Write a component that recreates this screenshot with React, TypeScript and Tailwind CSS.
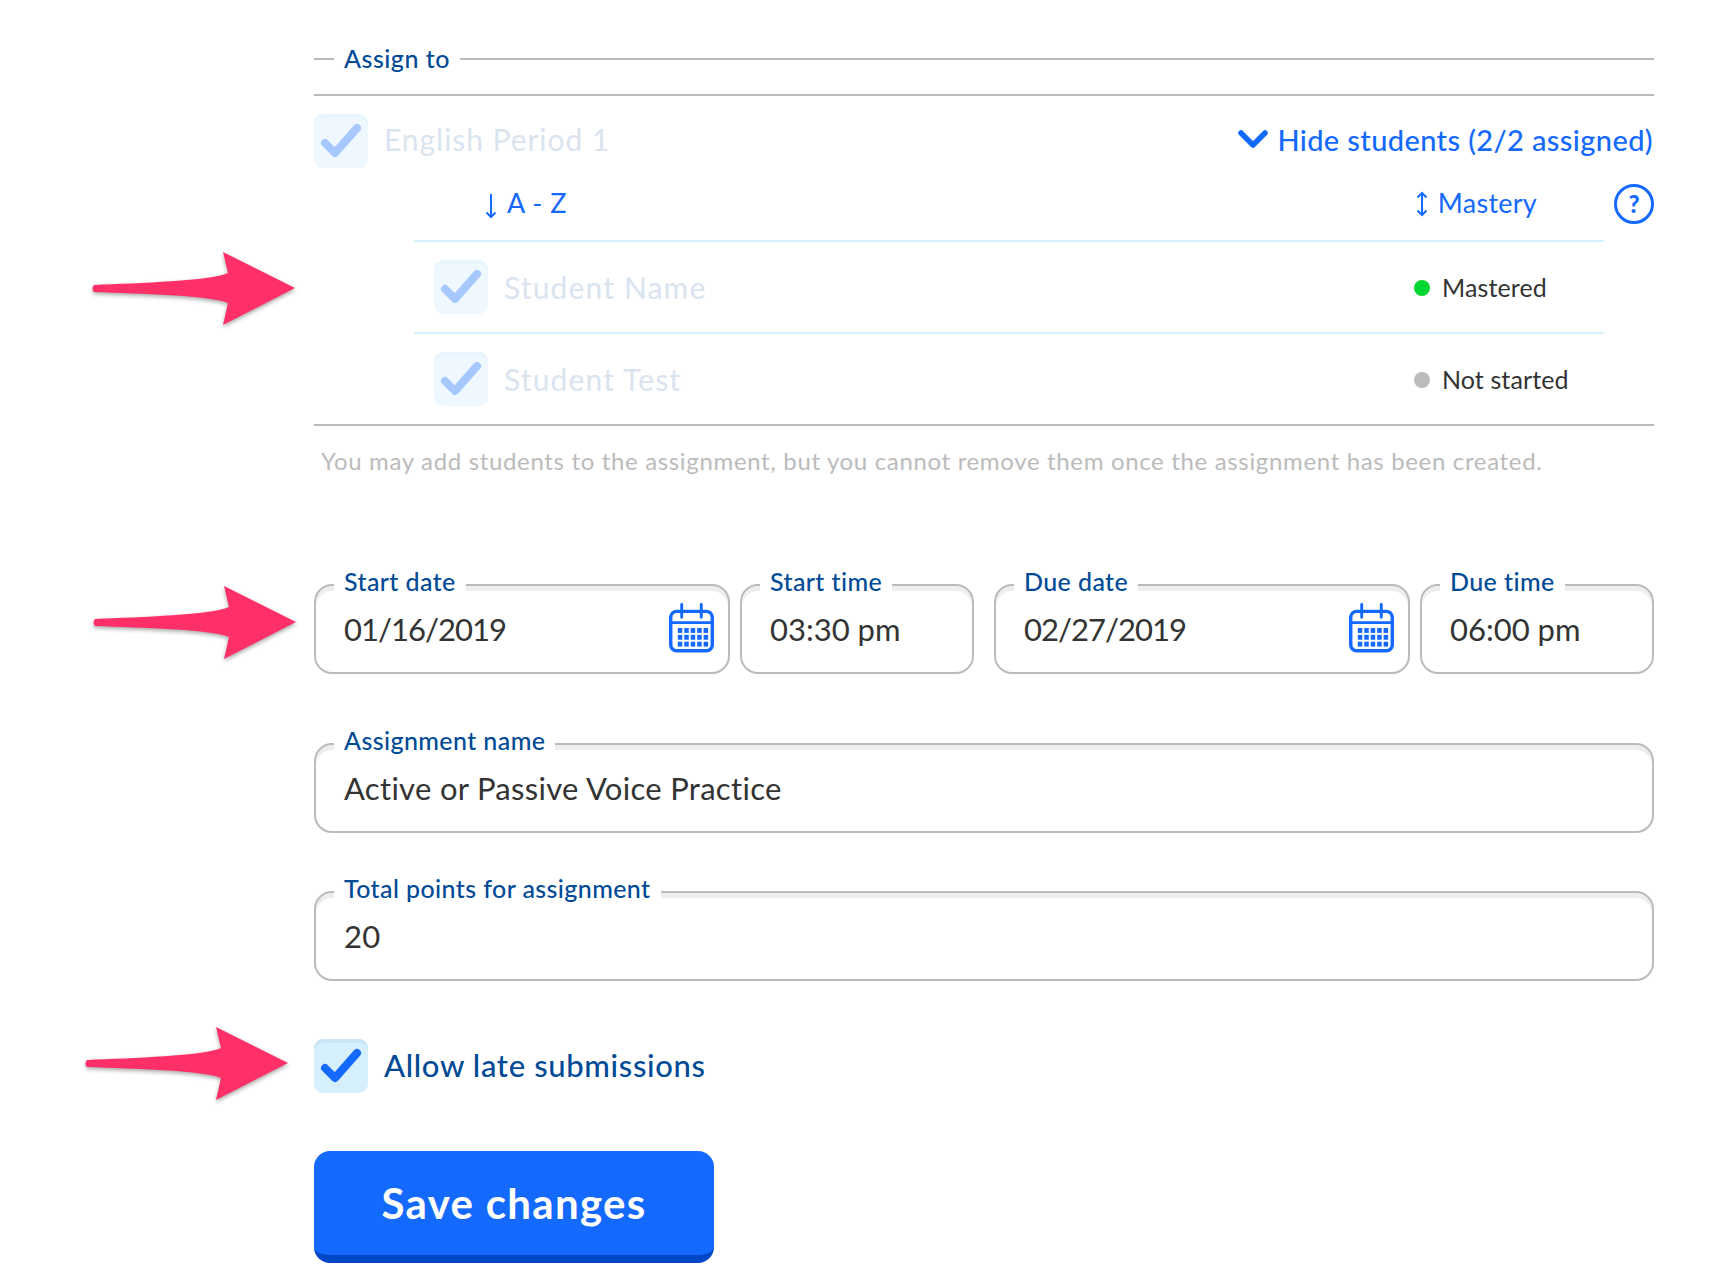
const font = "font-['Lato','Liberation_Sans',sans-serif]";

function Check({ faded }: { faded?: boolean }) {
  return (
    <div
      className={
        faded
          ? "flex h-[54px] w-[54px] shrink-0 items-center justify-center rounded-[9px] bg-[#eef8fe] shadow-[inset_0_4px_0_#e9f5fc]"
          : "flex h-[54px] w-[54px] shrink-0 items-center justify-center rounded-[9px] bg-[#d5effc] shadow-[inset_0_4px_0_#c8e6f6]"
      }
    >
      <svg width="54" height="54" viewBox="0 0 54 54" fill="none">
        <path
          d="M11 29 L21 39 L43 14"
          stroke={faded ? "#a6c8ff" : "#1469ff"}
          strokeWidth="8"
          strokeLinecap="round"
          strokeLinejoin="round"
        />
      </svg>
    </div>
  );
}

function Calendar() {
  const cols = [9, 15.6, 22.2, 28.8, 35.4];
  const rows = [25, 32, 39];
  return (
    <svg width="45" height="50" viewBox="0 0 46 50" fill="none" className="mt-[-3px]">
      <rect x="1.75" y="8" width="42.5" height="40.25" rx="6" stroke="#1469ff" strokeWidth="3.5" />
      <path d="M2 19.5 H44" stroke="#1469ff" strokeWidth="3" />
      <path d="M13 1 V14 M33 1 V14" stroke="#1469ff" strokeWidth="3" strokeLinecap="round" />
      {rows.map((y) =>
        cols.map((x) => <rect key={`${x}-${y}`} x={x} y={y} width="4.6" height="5" fill="#1469ff" />)
      )}
    </svg>
  );
}

function Field({
  label,
  value,
  width,
  calendar,
  className,
  valueClass,
}: {
  label: string;
  value: string;
  width?: string;
  calendar?: boolean;
  className?: string;
  valueClass?: string;
}) {
  return (
    <div
      className={`relative flex h-[90px] items-center justify-between rounded-[18px] border-2 border-[#bbbbbb] bg-white pl-[28px] pr-[14px] shadow-[inset_0_5px_0_#eeeeee] ${width ?? "w-full"} ${className ?? ""}`}
    >
      <span className="absolute left-[18px] top-[-18px] h-[28px] bg-white px-[10px] text-[25px] font-medium leading-[26px] tracking-[0.4px] text-[#004a96]">
        {label}
      </span>
      <span className={`text-[31px] text-[#333333] ${valueClass ?? "tracking-[0.3px]"}`}>{value}</span>
      {calendar && <Calendar />}
    </div>
  );
}

function StudentRow({ name, status, dot, border }: { name: string; status: string; dot: string; border?: boolean }) {
  return (
    <div className={`flex items-center justify-between pl-[20px] ${border ? "h-[92px] border-b-2 border-[#d5effc]" : "h-[90px]"}`}>
      <div className="flex items-center gap-[16px]">
        <Check faded />
        <span className="text-[30px] tracking-[1.15px] text-[#d9e4f0]">{name}</span>
      </div>
      <div className="flex w-[190px] items-center gap-[12px] pt-[2px]">
        <span className={`h-[16px] w-[16px] rounded-full ${dot}`} />
        <span className="text-[25px] tracking-[0.1px] text-[#333333]">{status}</span>
      </div>
    </div>
  );
}

function Arrow({ className }: { className: string }) {
  return (
    <svg
      className={`absolute drop-shadow-[0_2px_2px_rgba(0,0,0,0.35)] ${className}`}
      width="215"
      height="84"
      viewBox="0 0 215 84"
      fill="none"
    >
      <path
        d="M4 35 C50 33 120 31 138 23 L133 2 L205 38 L133 75 L138 53 C118 45 50 44 4 42 Q1 38.5 4 35 Z"
        fill="#ff3068"
      />
    </svg>
  );
}

export default function App() {
  return (
    <div className={`relative h-[1286px] w-full bg-white ${font}`}>
      <Arrow className="left-[90px] top-[250px]" />
      <Arrow className="left-[91px] top-[584px]" />
      <Arrow className="left-[83px] top-[1025px]" />

      <div className="ml-[314px] w-[1340px] pt-[41px]">
        <div className="flex h-[36px] items-center">
          <div className="h-[2px] w-[20px] bg-[#bbbbbb]" />
          <span className="px-[10px] text-[25px] font-medium tracking-[0.5px] text-[#004a96]">Assign to</span>
          <div className="h-[2px] flex-1 bg-[#bbbbbb]" />
        </div>

        <div className="mt-[17px] border-y-2 border-[#bbbbbb] pt-[18px]">
          <div className="flex items-center justify-between">
            <div className="flex items-center gap-[16px]">
              <Check faded />
              <span className="mt-[-4px] text-[30px] tracking-[0.95px] text-[#d9e4f0]">English Period 1</span>
            </div>
            <div className="flex items-center gap-[9px]">
              <svg width="30" height="18" viewBox="0 0 30 18" fill="none" className="mt-[-4px]">
                <path d="M3 3 L15 15 L27 3" stroke="#1469ff" strokeWidth="5.5" strokeLinecap="round" strokeLinejoin="round" />
              </svg>
              <span className="mt-[-2px] pr-[1px] text-[29px] font-medium tracking-[0.38px] text-[#1469ff]">Hide students (2/2 assigned)</span>
            </div>
          </div>

          <div className="mt-[16px] flex h-[40px] items-center text-[#1469ff]">
            <div className="ml-[170px] flex items-center gap-[9px]">
              <svg width="14" height="26" viewBox="0 0 14 26" fill="none" className="mt-[4px]">
                <path d="M7 1 V24 M2.5 19.5 L7 24 L11.5 19.5" stroke="#1469ff" strokeWidth="2" />
              </svg>
              <span className="mt-[-2px] text-[27px] tracking-[0.5px]">A - Z</span>
            </div>
            <div className="ml-auto flex items-center gap-[9px]">
              <svg width="14" height="26" viewBox="0 0 14 26" fill="none">
                <path d="M7 2 V24 M2.5 6.5 L7 2 L11.5 6.5 M2.5 19.5 L7 24 L11.5 19.5" stroke="#1469ff" strokeWidth="2" />
              </svg>
              <span className="mt-[-2px] text-[27px] tracking-[0.25px]">Mastery</span>
            </div>
            <div className="ml-[77px] flex h-[40px] w-[40px] items-center justify-center rounded-full border-[3px] border-[#1469ff] text-[24px] font-black leading-none">
              ?
            </div>
          </div>

          <div className="ml-[100px] mt-[16px] w-[1190px] border-t-2 border-[#d5effc]">
            <StudentRow name="Student Name" status="Mastered" dot="bg-[#00d632]" border />
            <StudentRow name="Student Test" status="Not started" dot="bg-[#bbbbbb]" />
          </div>
        </div>

        <p className="ml-[7px] mt-[17px] h-[36px] text-[24px] leading-[36px] tracking-[0.66px] text-[#bbbbbb]">
          You may add students to the assignment, but you cannot remove them once the assignment has been created.
        </p>

        <div className="mt-[105px] flex">
          <Field label="Start date" value="01/16/2019" width="w-[416px]" calendar valueClass="tracking-[-1px]" />
          <Field label="Start time" value="03:30 pm" width="w-[234px]" className="ml-[10px]" valueClass="tracking-[0px]" />
          <Field label="Due date" value="02/27/2019" width="w-[416px]" calendar className="ml-[20px]" valueClass="tracking-[-1px]" />
          <Field label="Due time" value="06:00 pm" width="w-[234px]" className="ml-[10px]" valueClass="tracking-[0px]" />
        </div>

        <Field label="Assignment name" value="Active or Passive Voice Practice" className="mt-[69px]" />
        <Field label="Total points for assignment" value="20" className="mt-[58px]" />

        <div className="mt-[58px] flex items-center gap-[16px]">
          <Check />
          <span className="mt-[-2px] text-[31px] font-medium tracking-[0.65px] text-[#004a96]">Allow late submissions</span>
        </div>

        <button className="mt-[58px] flex h-[112px] w-[400px] items-center justify-center rounded-[16px] border-b-8 border-[#0047c8] bg-[#1469ff] text-[42px] font-bold tracking-[1.3px] text-white">
          Save changes
        </button>
      </div>
    </div>
  );
}
